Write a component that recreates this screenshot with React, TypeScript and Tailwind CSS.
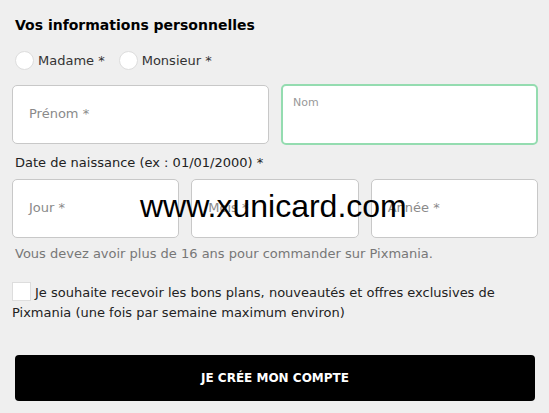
import React from "react";

const font = { fontFamily: '"DejaVu Sans", "Liberation Sans", sans-serif' };

function Field({ label, className = "" }: { label: string; className?: string }) {
  return (
    <div
      className={`flex h-[59px] items-center rounded-[5px] border border-[#c8c8c8] bg-white px-4 ${className}`}
    >
      <span className="text-[13px] text-[#8a8a8a]">{label}</span>
    </div>
  );
}

export default function App() {
  return (
    <div className="relative h-[413px] w-[549px] bg-[#efefef] text-[#222]" style={font}>
      <div className="flex flex-col pl-[12px] pr-[11px]">
        <h2 className="mt-[15px] pl-[3px] text-[14px] font-bold leading-5 text-black">
          Vos informations personnelles
        </h2>

        <div className="mt-[16px] flex items-center gap-[14px] pl-[3px] text-[13px] text-[#333]">
          <label className="flex items-center gap-[4px]">
            <span className="h-[19px] w-[19px] rounded-full border border-[#ddd] bg-white" />
            Madame *
          </label>
          <label className="flex items-center gap-[4px]">
            <span className="h-[19px] w-[19px] rounded-full border border-[#ddd] bg-white" />
            Monsieur *
          </label>
        </div>

        <div className="mt-[14px] grid grid-cols-2 gap-[12px]">
          <Field label="Prénom *" />
          {/* focused field: label floats to the top */}
          <div className="-mt-px h-[61px] rounded-[5px] border-2 border-[#94dcb0] bg-white px-[10px] pt-[3px]">
            <span className="text-[11px] text-[#999]">Nom</span>
          </div>
        </div>

        <p className="mt-[8px] pl-[3px] text-[13px] leading-5 text-[#222]">
          Date de naissance (ex : 01/01/2000) *
        </p>

        <div className="mt-[6px] grid grid-cols-3 gap-[12px]">
          <Field label="Jour *" />
          <Field label="Mois *" />
          <Field label="Année *" />
        </div>

        <p className="mt-[6px] pl-[3px] text-[13px] leading-5 text-[#777]">
          Vous devez avoir plus de 16 ans pour commander sur Pixmania.
        </p>

        <p className="mt-[18px] text-[13px] leading-[20px] text-[#222]">
          <span className="mr-[4px] inline-block h-[19px] w-[19px] border border-[#ddd] bg-white align-[-4px]" />
          Je souhaite recevoir les bons plans, nouveautés et offres exclusives de Pixmania (une fois par
          semaine maximum environ)
        </p>

        <button className="mx-[3px] mt-[32px] h-[46px] rounded-[4px] bg-black text-[12px] font-semibold text-white">
          JE CRÉE MON COMPTE
        </button>
      </div>

      <div
        className="absolute left-[140px] top-[188px] text-[32px] leading-9 text-black"
        style={{ fontFamily: '"Liberation Sans", Arial, sans-serif' }}
      >
        www.xunicard.com
      </div>
    </div>
  );
}
